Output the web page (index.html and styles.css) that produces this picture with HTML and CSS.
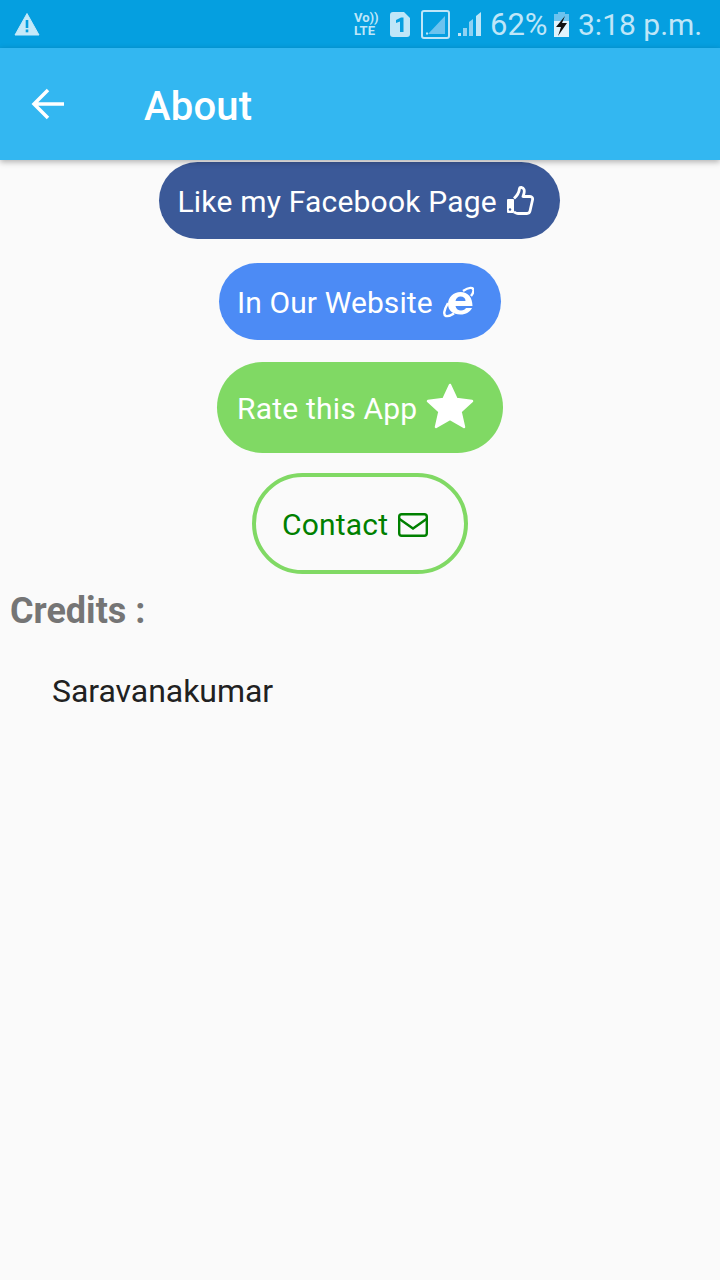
FILE: index.html
```html
<!DOCTYPE html>
<html lang="en">
<head>
<meta charset="utf-8">
<title>About</title>
<link rel="stylesheet" href="styles.css">
</head>
<body>
<div class="status">
  <svg class="warn" width="26" height="24" viewBox="0 0 26 24"><path d="M13 1.500L25 23H1Z" fill="#c5e9f9" stroke="#c5e9f9" stroke-linejoin="round"/><rect x="11.700" y="8" width="2.600" height="8" fill="#059fe0"/><rect x="11.700" y="17.500" width="2.600" height="2.800" fill="#059fe0"/></svg>
  <div class="status-right">
    <div class="volte"><span>Vo))</span><span>LTE</span></div>
    <svg class="sim" width="20" height="25" viewBox="0 0 20 25"><path d="M3 0H14L20 6V22a3 3 0 0 1-3 3H3a3 3 0 0 1-3-3V3a3 3 0 0 1 3-3Z" fill="#bfe6f8"/><path d="M6 8L11 5.500H13.500V20H10V9.500L6 11Z" fill="#059fe0"/></svg>
    <svg class="wifi" width="29" height="29" viewBox="0 0 29 29"><rect x="1" y="1" width="27" height="27" rx="2" fill="none" stroke="#bfe6f8" stroke-width="2"/><path d="M7 24L24 6V24Z" fill="#6cc3ef"/><rect x="5" y="22.500" width="2" height="2" fill="#bfe6f8"/></svg>
    <svg class="signal" width="24" height="26" viewBox="0 0 24 26"><rect x="0" y="22" width="3" height="3" fill="#bfe6f8"/><rect x="5" y="17" width="4" height="8" fill="#8fd2f3"/><path d="M11 11L15 8V25H11Z" fill="#8fd2f3"/><path d="M18 5L23 1V25H18Z" fill="#bfe6f8"/></svg>
    <span class="pct">62%</span>
    <svg class="batt" width="17" height="25" viewBox="0 0 17 25"><rect x="5" y="0" width="7" height="3" fill="#6cc3ef"/><rect x="1" y="2" width="15" height="7" fill="#6cc3ef"/><rect x="1" y="9" width="15" height="16" fill="#dff3fc"/><path d="M12 4L3 15H8L5 24L14 11H9L12 4Z" fill="#111"/></svg>
    <span class="time">3:18 p.m.</span>
  </div>
</div>
<header class="appbar">
  <svg class="back" width="34" height="32" viewBox="0 0 34 32"><path d="M33 16H4M17 2L3 16L17 30" fill="none" stroke="#fff" stroke-width="3.500"/></svg>
  <h1 class="title">About</h1>
</header>
<main class="content">
  <a class="btn btn-fb"><span>Like my Facebook Page</span>
    <svg class="ico-like" width="28" height="29" viewBox="0 0 28 29"><path d="M8 12.500C12 9 13 7 13.500 2.500C13.700 1 17 1 18 3.500C19 6 17.500 8.500 17 10.500H24C26 10.500 27 12 26.500 14L24 25C23.600 26.800 22.500 27.500 21 27.500H12C10 27.500 9 26.500 8 26" fill="none" stroke="#fff" stroke-width="2.800" stroke-linejoin="round"/><rect x="1" y="13" width="7" height="14" rx="1" fill="#fff"/><circle cx="4" cy="23.500" r="1.200" fill="#3b5998"/></svg>
  </a>
  <a class="btn btn-web"><span>In Our Website</span>
    <svg class="ico-ie" width="31" height="32" viewBox="0 0 31 32"><path d="M5 18C5 11 10.500 6 17.500 6C25 6 29.500 11.500 29.500 20H12.500C13 23 15.500 24.500 18 24.500C20.500 24.500 22 23.500 23 22H29C27 26 23 28.500 17.500 28.500C10 28.500 5 24.500 5 18ZM12.500 15H22.500C22.500 12 20.500 10.500 17.500 10.500C15 10.500 13 12 12.500 15Z" fill="#fff" fill-rule="evenodd"/><path d="M20 5C26 1 30 1 30.500 4C30.800 6 29.500 8 28 10M5 17C1 24 0 29 3 30C5 30.500 8 29.500 11 27.500" fill="none" stroke="#fff" stroke-width="2.400"/></svg>
  </a>
  <a class="btn btn-rate"><span>Rate this App</span>
    <svg class="ico-star" width="48" height="46" viewBox="0 0 48 46"><path d="M24 2L30.500 16L46 18L34.500 28.500L38 44L24 36L10 44L13.500 28.500L2 18L17.500 16Z" fill="#fff" stroke="#fff" stroke-width="2.500" stroke-linejoin="round"/></svg>
  </a>
  <a class="btn btn-contact"><span>Contact</span>
    <svg class="ico-mail" width="30" height="24" viewBox="0 0 30 24"><rect x="1.200" y="1.200" width="27.600" height="21.600" rx="2.500" fill="none" stroke="#008000" stroke-width="2.400"/><path d="M1.500 6L15 15.500L28.500 6" fill="none" stroke="#008000" stroke-width="2.400"/></svg>
  </a>
  <h2 class="credits">Credits :</h2>
  <p class="name">Saravanakumar</p>
</main>
</body>
</html>
```
FILE: styles.css
```css
* { box-sizing: border-box; }
html, body { margin: 0; padding: 0; }
body {
  width: 720px;
  height: 1280px;
  overflow: hidden;
  background: #fafafa;
  font-family: Roboto, "Noto Sans", sans-serif;
  display: flex;
  flex-direction: column;
}
.status {
  height: 48px;
  background: #059fe0;
  display: flex;
  align-items: center;
  justify-content: space-between;
  padding: 0 18px 0 14px;
  color: #bfe6f8;
  flex: none;
}
.status-right { display: flex; align-items: center; }
.volte {
  display: flex;
  flex-direction: column;
  font-size: 13px;
  font-weight: 700;
  line-height: 13px;
  width: 24px;
  margin-right: 12px;
}
.sim { margin-right: 11px; }
.wifi { margin-right: 8px; }
.signal { margin-right: 8px; }
.pct { font-size: 31px; line-height: 48px; width: 56px; margin-right: 7px; margin-top: 2px; }
.batt { margin-right: 8px; }
.time { font-size: 30px; line-height: 48px; width: 124px; white-space: nowrap; margin-top: 2px; }
.appbar {
  height: 112px;
  background: #33b7f1;
  display: flex;
  align-items: center;
  padding: 0 0 0 31px;
  box-shadow: 0 2px 6px rgba(0,0,0,.3);
  position: relative;
  flex: none;
}
.back { margin-top: -1px; }
.title {
  margin: 6px 0 0 79px;
  font-size: 40px;
  font-weight: 500;
  letter-spacing: .2px;
  color: #fff;
  line-height: 100px;
}
.content {
  display: flex;
  flex-direction: column;
  align-items: center;
  padding-top: 2px;
}
.btn {
  display: flex;
  align-items: center;
  border-radius: 46px;
  font-size: 30px;
  letter-spacing: .2px;
  color: #fff;
  padding-top: 2px;
  gap: 10px;
}
.btn-fb { width: 401px; height: 77px; margin-right: 2px; background: #3b5998; padding-left: 19px; gap: 9px; }
.btn-web { width: 282px; height: 77px; margin-top: 24px; background: #4c8bf5; padding-left: 18px; letter-spacing: .1px; }
.btn-rate { width: 286px; height: 91px; margin-top: 22px; background: #80d964; padding-left: 20px; gap: 9px; }
.btn-contact {
  width: 216px;
  height: 101px;
  margin-top: 20px;
  border-radius: 51px;
  border: 4px solid #80d964;
  background: #fafafa;
  color: #008000;
  padding-left: 26px;
}
.ico-like { margin-top: -2px; }
.ico-ie { margin-top: -2px; }
.ico-star { margin-top: -6px; }
.credits {
  align-self: flex-start;
  margin: 13px 0 0 10px;
  font-size: 36px;
  font-weight: 700;
  line-height: 48px;
  color: #757575;
}
.name {
  align-self: flex-start;
  margin: 36px 0 0 52px;
  font-size: 32px;
  letter-spacing: -.05px;
  line-height: 40px;
  color: #212121;
}
```
